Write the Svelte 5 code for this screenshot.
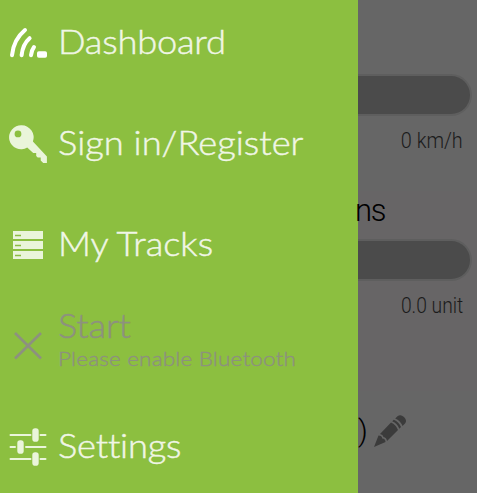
<script>
  const items = [
    { id: 'dashboard', label: 'Dashboard' },
    { id: 'key', label: 'Sign in/Register' },
    { id: 'tracks', label: 'My Tracks' },
    { id: 'start', label: 'Start', note: 'Please enable Bluetooth' },
    { id: 'settings', label: 'Settings' }
  ];
</script>

<div class="screen">
  <nav class="drawer">
    {#each items as item}
      <div class="item {item.id}">
        <svg class="icon" viewBox="0 0 40 40" width="40" height="40">
          {#if item.id === 'dashboard'}
            <g fill="none" stroke="#fff" stroke-width="4" stroke-linecap="round">
              <path d="M4 32.200C5 22 9.200 13.500 17 7" />
              <path d="M13.600 32.200C14.300 25.500 16.700 19.500 21.600 15.200" />
              <path d="M23 32.200C23.400 28.500 24.500 26 26 24" />
            </g>
            <rect x="29" y="28.300" width="10" height="6.500" rx="1.800" fill="#fff" />
          {:else if item.id === 'key'}
            <path transform="translate(.7 0)" fill="#eaf5da" fill-rule="evenodd" d="M13 1.300a12 12 0 0 1 11.200 16.200L38.200 32.500V39H34.500L32 36.500V33.500H29L27.500 32V29H24.500L18.500 23.600A12 12 0 1 1 13 1.300ZM9.300 6.500a3.400 3.400 0 1 0 0 6.800a3.400 3.400 0 0 0 0-6.800Z" />
          {:else if item.id === 'tracks'}
            <g fill="#eaf5da">
              <rect x="5" y="6" width="30" height="8" />
              <rect x="5" y="16" width="30" height="8" />
              <rect x="5" y="26" width="30" height="8" />
            </g>
            <path d="M7 10.500h6M7 20.500h6M7 30.500h6" stroke="#8abd40" stroke-width="1.500" />
          {:else if item.id === 'start'}
            <path d="M7 7L33 32.500M33 7L7 32.500" stroke="#8d917f" stroke-width="2.700" />
          {:else}
            <path d="M2.500 8h20M32.500 8h5M2.500 20h4.500M18 20h19.500M2.500 32h20M32.500 32h5" stroke="#eaf5da" stroke-width="2" stroke-linecap="round" />
            <g fill="#eaf5da">
              <rect x="24.300" y="1.300" width="6.400" height="13.400" rx="2.800" />
              <rect x="9.300" y="13.300" width="6.400" height="13.400" rx="2.800" />
              <rect x="24.300" y="25.300" width="6.400" height="13.400" rx="2.800" />
            </g>
          {/if}
        </svg>
        <div class="copy">
          <span class="label">{item.label}</span>
          {#if item.note}<span class="note">{item.note}</span>{/if}
        </div>
      </div>
    {/each}
  </nav>
  <main class="content">
    <section class="speed">
      <div class="bar"></div>
      <div class="value"><span>0 km/h</span></div>
    </section>
    <section class="emissions">
      <h2>ns</h2>
      <div class="bar"></div>
      <div class="value"><span>0.0 unit</span></div>
    </section>
    <section class="vehicle">
      <span class="paren">)</span>
      <svg viewBox="0 0 34 34" width="34" height="34" fill="#3b3b3b">
        <path d="M1 33L5.500 21.500Q9 21.500 9.200 24.500Q12.500 24.500 12.500 28Z" />
        <path d="M7 20L18 8.500Q23 10.500 25 16L14 27Q13.500 23.500 10.500 23Q10 20.500 7 20Z" />
        <path d="M19.200 7.300L20.800 5.800Q26 8.200 28 13L26.400 14.700Q24.300 9.600 19.200 7.300Z" />
        <path d="M22.200 4.500L24.500 2.200Q27.500-.2 31 3Q34.500 6.500 32 9.500L29.500 12Q27.500 6.800 22.200 4.500Z" />
      </svg>
    </section>
  </main>
</div>

<style>
  .screen {
    display: flex;
    width: 477px;
    height: 493px;
    overflow: hidden;
    background: #666;
  }
  .drawer {
    box-sizing: border-box;
    flex: 0 0 358px;
    display: flex;
    flex-direction: column;
    gap: 61px;
    padding: 23px 0 0 8px;
    background: #8cbf40;
    color: #f0f6e6;
    font-family: Lato, sans-serif;
    font-weight: 300;
    font-variant-ligatures: none;
  }
  .item {
    flex: none;
    height: 40px;
    display: flex;
    align-items: center;
    gap: 9.5px;
    white-space: nowrap;
  }
  .icon {
    flex: none;
  }
  .copy {
    display: flex;
    flex-direction: column;
    margin-top: -5px;
    transform: scaleX(1.1);
    transform-origin: left;
    -webkit-text-stroke: 0.45px currentColor;
  }
  .label {
    font-size: 33px;
    line-height: 40px;
  }
  .dashboard .label {
    letter-spacing: -0.2px;
  }
  .settings .label {
    letter-spacing: -0.2px;
  }
  .start .copy {
    margin-top: -14px;
  }
  .start .label {
    line-height: 37px;
    letter-spacing: -0.2px;
  }
  .start {
    color: #8d917f;
  }
  .note {
    font-size: 20.5px;
    line-height: 28px;
    letter-spacing: 0.15px;
    -webkit-text-stroke-width: 0.4px;
  }
  .content {
    flex: 1;
    display: flex;
    flex-direction: column;
    font-family: Roboto, sans-serif;
    font-weight: 300;
    color: #000;
  }
  .speed {
    height: 117px;
    padding-top: 74px;
  }
  .emissions {
    height: 200px;
    background: #676566;
  }
  h2 {
    margin: 0;
    height: 48px;
    font-size: 31px;
    line-height: 39px;
    font-weight: 300;
    letter-spacing: -1.3px;
    text-indent: -3px;
  }
  .bar {
    box-sizing: border-box;
    width: 114px;
    height: 42px;
    border: 2px solid #5e5e5e;
    border-left: 0;
    border-radius: 0 21px 21px 0;
    background: #4b4b4b;
  }
  .value {
    padding-right: 14px;
    text-align: right;
    font-size: 22px;
    line-height: 50px;
    color: #1b1b1b;
  }
  .value span {
    display: inline-block;
    transform: scaleX(0.9);
    transform-origin: right;
  }
  .emissions .value span {
    transform: scaleX(0.875);
  }
  .vehicle {
    display: flex;
    align-items: flex-start;
    padding-top: 23px;
    gap: 5px;
  }
  .paren {
    width: 10px;
    font-size: 30px;
    line-height: 34px;
  }
</style>
